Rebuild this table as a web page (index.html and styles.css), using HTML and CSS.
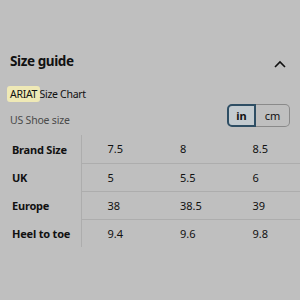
FILE: index.html
```html
<!DOCTYPE html>
<html>
<head>
<meta charset="utf-8">
<link rel="stylesheet" href="styles.css">
</head>
<body>
<div class="panel">
  <div class="head">
    <h1 class="title">Size guide</h1>
    <svg class="chev" width="14" height="10" viewBox="0 0 14 10"><path d="M2 8 L7 3 L12 8" fill="none" stroke="#111" stroke-width="1.6"/></svg>
  </div>
  <div class="chart"><span class="brand">ARIAT</span> Size Chart</div>
  <div class="unitrow">
    <span class="sub">US Shoe size</span>
    <div class="toggle">
      <span class="seg on">in</span>
      <span class="seg">cm</span>
    </div>
  </div>
  <table class="tbl">
    <tr><th>Brand Size</th><td>7.5</td><td>8</td><td>8.5</td></tr>
    <tr><th>UK</th><td>5</td><td>5.5</td><td>6</td></tr>
    <tr><th>Europe</th><td>38</td><td>38.5</td><td>39</td></tr>
    <tr><th>Heel to toe</th><td>9.4</td><td>9.6</td><td>9.8</td></tr>
  </table>
</div>
</body>
</html>
```
FILE: styles.css
```css
html, body {
  margin: 0;
  padding: 0;
  background: #bfbfbf;
}
body {
  width: 300px;
  height: 300px;
  overflow: hidden;
  font-family: "Noto Sans", "DejaVu Sans", sans-serif;
  color: #111;
}
.panel {
  padding: 50px 10px 0 10px;
}
.head {
  display: flex;
  justify-content: space-between;
  align-items: center;
  height: 22px;
}
.title {
  margin: 0;
  font-size: 13.5px;
  font-weight: 700;
  letter-spacing: -0.4px;
}
.chev {
  margin-right: 3px;
  margin-top: 6px;
}
.chart {
  margin-top: 14px;
  font-size: 10.5px;
  letter-spacing: -0.3px;
  line-height: 16px;
}
.brand {
  background: #efe9b6;
  border-radius: 3px;
  padding: 1px 3px;
  margin-left: -3px;
  margin-right: -3px;
}
.unitrow {
  display: flex;
  justify-content: space-between;
  align-items: center;
  margin-top: 1px;
}
.sub {
  font-size: 10.5px;
  letter-spacing: -0.2px;
  color: #4a4a4a;
  margin-top: 10px;
}
.toggle {
  display: flex;
  height: 23px;
  margin-left: auto;
}
.seg {
  box-sizing: border-box;
  display: flex;
  align-items: center;
  justify-content: center;
  font-size: 11px;
  border: 1px solid #8a8a8a;
  border-left: none;
  width: 34px;
  border-radius: 0 5px 5px 0;
}
.seg.on {
  width: 29px;
  border: 2px solid #2e4e64;
  background: #c3cbd0;
  border-radius: 5px 0 0 5px;
  font-weight: 700;
}
.tbl {
  margin-top: 8px;
  border-collapse: collapse;
  width: 290px;
  font-size: 11px;
}
.tbl tr {
  height: 28px;
}
.tbl th {
  text-align: left;
  font-weight: 700;
  width: 70px;
  border-right: 1px solid #adadad;
  padding: 0 0 0 2px;
  letter-spacing: -0.2px;
}
.tbl td {
  padding: 0 0 0 25px;
  width: 48px;
  border-bottom: 1px solid #adadad;
}
.tbl tr:last-child td {
  border-bottom: none;
}
```
